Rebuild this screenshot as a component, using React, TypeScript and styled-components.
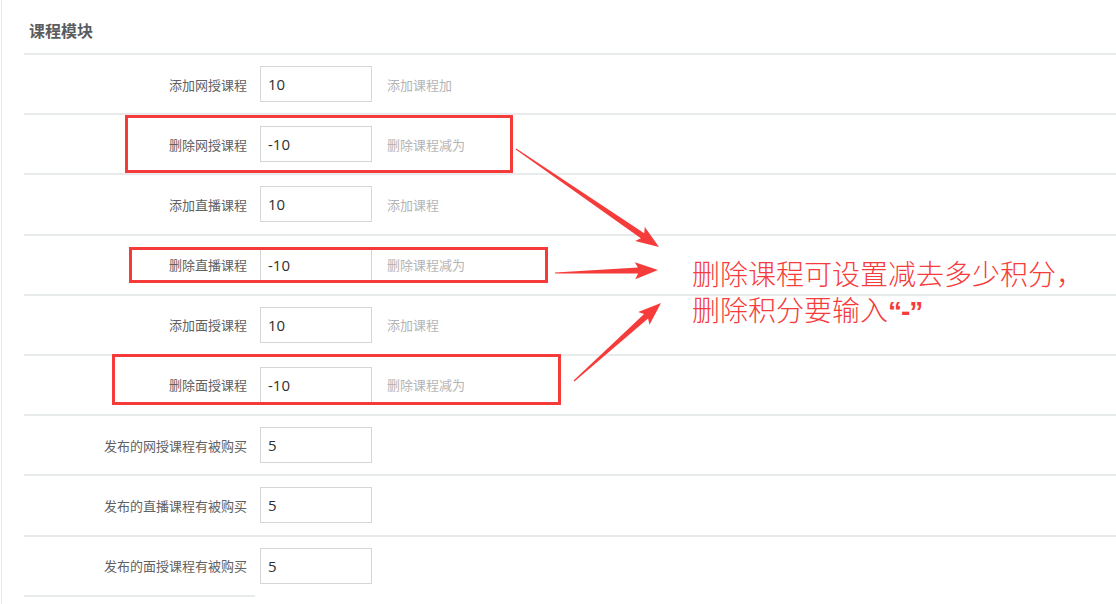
import React from 'react';
import styled, { createGlobalStyle } from 'styled-components';

interface IRule {
  label: string;
  value: string;
  hint?: string;
}

interface IMark {
  left: number;
  top: number;
  width: number;
  height: number;
}

const RULES: IRule[] = [
  { label: '添加网授课程', value: '10', hint: '添加课程加' },
  { label: '删除网授课程', value: '-10', hint: '删除课程减为' },
  { label: '添加直播课程', value: '10', hint: '添加课程' },
  { label: '删除直播课程', value: '-10', hint: '删除课程减为' },
  { label: '添加面授课程', value: '10', hint: '添加课程' },
  { label: '删除面授课程', value: '-10', hint: '删除课程减为' },
  { label: '发布的网授课程有被购买', value: '5' },
  { label: '发布的直播课程有被购买', value: '5' },
  { label: '发布的面授课程有被购买', value: '5' },
];

// red frames drawn over the screenshot, in page coordinates
const MARKS: IMark[] = [
  { left: 123, top: 115, width: 388, height: 58 },
  { left: 127, top: 247, width: 419, height: 36 },
  { left: 110, top: 354, width: 449, height: 51 },
];

const ARROWS: [number, number, number, number][] = [
  [516, 149, 659, 247],
  [555, 273, 658, 270],
  [574, 381, 661, 303],
];

const arrowPoints = (x1: number, y1: number, x2: number, y2: number) => {
  const dx = x2 - x1;
  const dy = y2 - y1;
  const len = Math.hypot(dx, dy);
  const ux = dx / len;
  const uy = dy / len;
  const nx = -uy;
  const ny = ux;
  const head = 20;
  const bx = x2 - ux * head;
  const by = y2 - uy * head;
  const pts = [
    [x1 + nx * 0.6, y1 + ny * 0.6],
    [bx + nx * 3, by + ny * 3],
    [bx - ux * 3 + nx * 8.5, by - uy * 3 + ny * 8.5],
    [x2, y2],
    [bx - ux * 3 - nx * 8.5, by - uy * 3 - ny * 8.5],
    [bx - nx * 3, by - ny * 3],
    [x1 - nx * 0.6, y1 - ny * 0.6],
  ];
  return pts.map((p) => `${p[0].toFixed(1)},${p[1].toFixed(1)}`).join(' ');
};

const GlobalStyle = createGlobalStyle`
  html, body {
    margin: 0;
    padding: 0;
    background: #fff;
  }
  body {
    font-family: "Noto Sans CJK SC", "Open Sans", sans-serif;
    color: #676a6c;
  }
`;

export default function App() {
  return (
    <>
      <GlobalStyle />
      <PageS>
        <HeaderS>课程模块</HeaderS>
        <FormS>
          {RULES.map((itm) => (
            <RowS key={itm.label}>
              <LabelS>{itm.label}</LabelS>
              <InputS defaultValue={itm.value} readOnly />
              {itm.hint && <HintS>{itm.hint}</HintS>}
            </RowS>
          ))}
          <EndRuleS />
        </FormS>

        <OverlayS>
          {MARKS.map((m, i) => (
            <MarkS
              key={i}
              style={{ left: m.left, top: m.top, width: m.width, height: m.height }}
            />
          ))}
          <ArrowsS width="1116" height="604" viewBox="0 0 1116 604">
            {ARROWS.map((a, i) => (
              <polygon key={i} points={arrowPoints(a[0], a[1], a[2], a[3])} fill="#f63b3b" />
            ))}
          </ArrowsS>
          <NoteS>
            <NoteLineS>删除课程可设置减去多少积分，</NoteLineS>
            <NoteLineS>
              删除积分要输入<QuoteS>“-”</QuoteS>
            </NoteLineS>
          </NoteS>
        </OverlayS>
      </PageS>
    </>
  );
}

const PageS = styled.div`
  position: relative;
  width: 1114px;
  height: 604px;
  margin-left: 1px;
  border-left: 1px solid #e6e6e6;
  overflow: hidden;
`;

const HeaderS = styled.div`
  height: 53px;
  box-sizing: border-box;
  padding: 19px 0 0 27px;
  font-size: 16px;
  line-height: 22px;
  font-weight: 700;
  color: #5a5c5e;
`;

const FormS = styled.div`
  margin-left: 22px;
`;

const RowS = styled.div`
  display: grid;
  grid-template-columns: 236px 112px auto;
  align-items: center;
  padding: 11px 0 11.2px;
  border-top: 2px solid #e8ebeb;
`;

const LabelS = styled.label`
  padding-right: 13px;
  text-align: right;
  font-size: 13px;
  color: #5f6163;
  white-space: nowrap;
`;

const InputS = styled.input`
  box-sizing: border-box;
  width: 112px;
  height: 36px;
  padding: 0 7px;
  border: 1px solid #d3d7d9;
  border-radius: 0;
  outline: none;
  font-family: "Open Sans", "Noto Sans CJK SC", sans-serif;
  font-size: 15px;
  color: #2f2f2f;
  background: #fff;
`;

const HintS = styled.span`
  margin-left: 15px;
  font-size: 13px;
  color: #b3b5b7;
  white-space: nowrap;
`;

const EndRuleS = styled.div`
  width: 231px;
  border-top: 2px solid #e8ebeb;
`;

const OverlayS = styled.div`
  position: absolute;
  inset: 0;
  pointer-events: none;
`;

const MarkS = styled.div`
  position: absolute;
  box-sizing: border-box;
  border: 3px solid #f53a3a;
`;

const ArrowsS = styled.svg`
  position: absolute;
  left: -2px;
  top: 0;
`;

const NoteS = styled.div`
  position: absolute;
  left: 690px;
  top: 255px;
  display: flex;
  flex-direction: column;
  font-size: 28px;
  font-weight: 300;
  color: #f63b3b;
  white-space: nowrap;
`;

const NoteLineS = styled.div`
  height: 36px;
  line-height: 36px;
`;

const QuoteS = styled.span`
  font-family: "Liberation Sans", sans-serif;
  font-weight: 700;
  letter-spacing: -1px;
`;
